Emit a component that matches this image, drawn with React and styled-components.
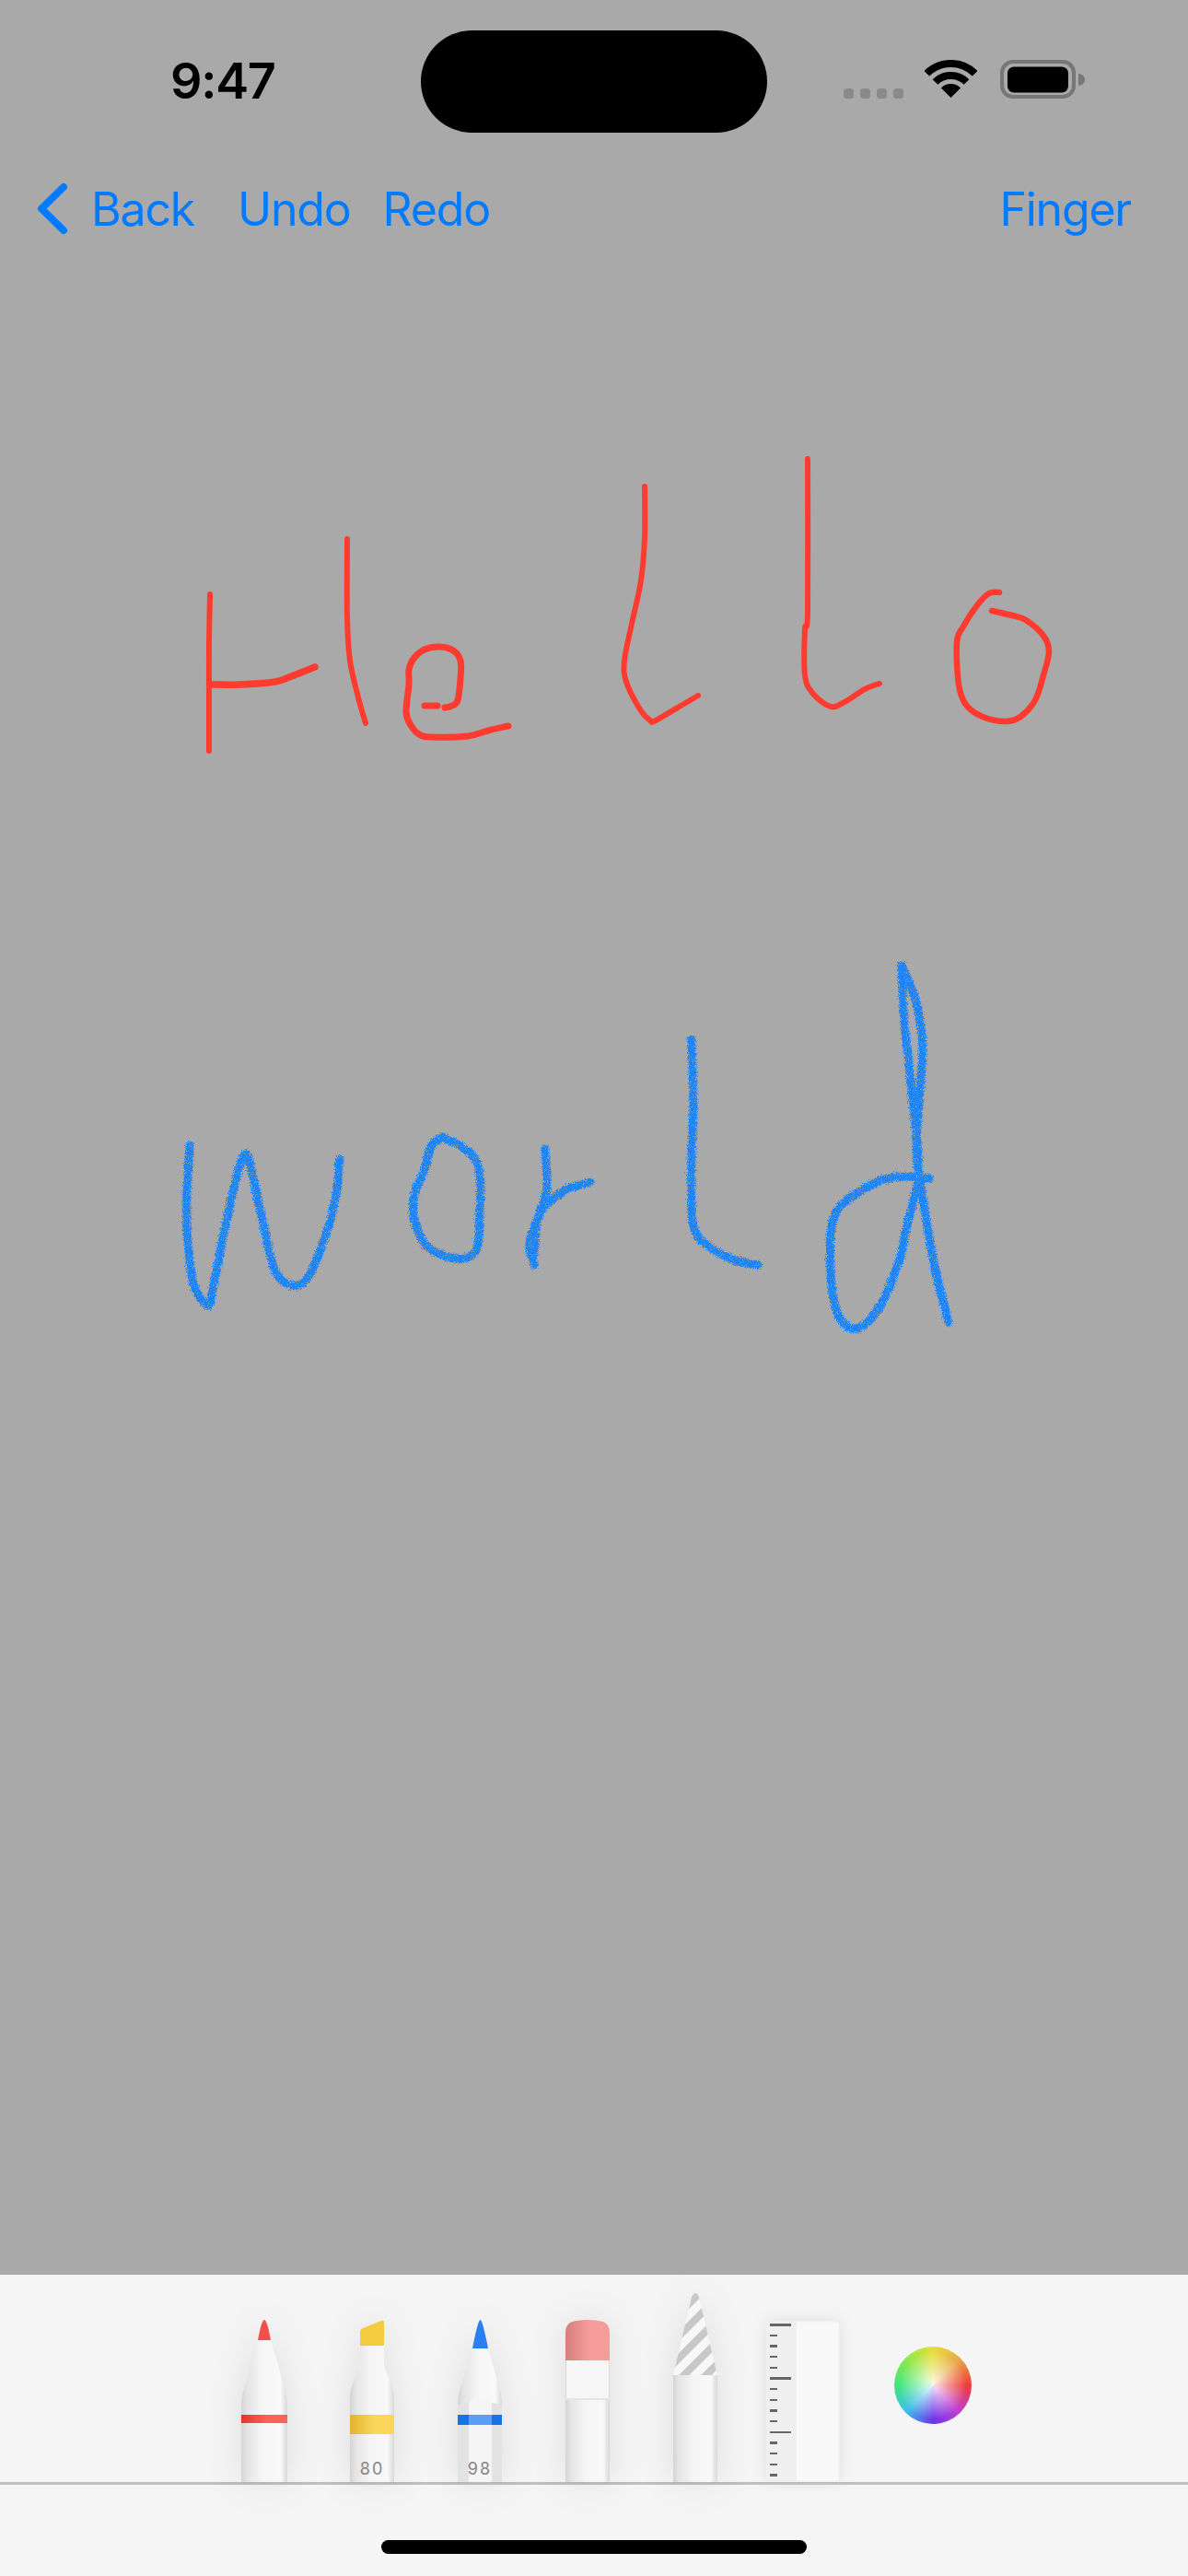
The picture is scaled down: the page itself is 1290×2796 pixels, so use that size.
import React from 'react'
import styled, { createGlobalStyle } from 'styled-components'

const RED_STROKES = [
  { width: 6, points: [[228, 645], [227, 700], [227, 760], [227, 815]] },
  { width: 7.5, points: [[230, 743], [261, 743], [299, 740], [314, 735], [342, 724]] },
  { width: 6, points: [[377, 585], [377, 670], [380, 717], [389, 757], [397, 785]] },
  { width: 7, points: [[461, 766], [475, 766]] },
  { width: 7, points: [[483, 768], [491, 766], [497, 760], [500, 736], [500, 717], [492, 706], [477, 702], [461, 705], [449, 715], [444, 727], [444, 743], [441, 773], [446, 787], [455, 797], [468, 800], [508, 799], [530, 793], [552, 788]] },
  { width: 6, points: [[700, 528], [700, 583], [696, 630], [686, 677], [678, 717], [680, 740], [695, 770], [706, 782], [712, 782], [746, 762], [758, 755]] },
  { width: 6, points: [[877, 498], [877, 663], [874, 683], [874, 733], [883, 753], [902, 767], [917, 762], [939, 748], [955, 742]] },
  { width: 6.5, points: [[1085, 643], [1074, 644], [1061, 657], [1046, 680], [1039, 697], [1041, 743], [1049, 765], [1067, 778], [1092, 783], [1108, 778], [1124, 760], [1133, 733], [1139, 707], [1133, 690], [1114, 673], [1099, 668], [1077, 663]] }
]

const BLUE_STROKES = [
  [[206, 1243], [203, 1303], [204, 1347], [210, 1393], [226, 1417], [233, 1390], [245, 1330], [259, 1270], [268, 1253], [276, 1283], [288, 1337], [299, 1380], [316, 1395], [334, 1387], [354, 1340], [365, 1297], [369, 1258]],
  [[480, 1234], [468, 1245], [461, 1270], [450, 1297], [450, 1323], [463, 1352], [494, 1366], [517, 1357], [521, 1317], [521, 1273], [509, 1250], [480, 1234]],
  [[592, 1247], [594, 1290], [586, 1317], [575, 1350], [580, 1373]],
  [[580, 1363], [586, 1317], [612, 1293], [624, 1288], [641, 1283]],
  [[751, 1128], [753, 1197], [751, 1263], [753, 1330], [770, 1353], [796, 1367], [823, 1373]],
  [[979, 1048], [982, 1107], [988, 1163], [995, 1230], [997, 1280], [985, 1330], [976, 1370], [956, 1417], [931, 1442], [910, 1427], [902, 1380], [905, 1323], [928, 1297], [968, 1278], [1009, 1279]],
  [[979, 1048], [991, 1075], [997, 1097], [1002, 1137], [998, 1197], [995, 1247], [999, 1280], [1014, 1370], [1030, 1435]]
]

const RULER_TICKS = [1, 0, 0, 0, 0, 1, 0, 0, 0, 0, 1, 0, 0, 0, 0]

// turns a list of sampled pen points into a smooth curve
function smoothPath (points) {
  let d = `M${points[0][0]} ${points[0][1]}`
  for (let i = 0; i < points.length - 1; i++) {
    const p0 = points[i - 1] || points[i]
    const p1 = points[i]
    const p2 = points[i + 1]
    const p3 = points[i + 2] || p2
    const c1x = p1[0] + (p2[0] - p0[0]) / 6
    const c1y = p1[1] + (p2[1] - p0[1]) / 6
    const c2x = p2[0] - (p3[0] - p1[0]) / 6
    const c2y = p2[1] - (p3[1] - p1[1]) / 6
    d += ` C${c1x} ${c1y} ${c2x} ${c2y} ${p2[0]} ${p2[1]}`
  }
  return d
}

const GlobalStyle = createGlobalStyle`
  html, body {
    margin: 0;
    padding: 0;
    background: #a9a9a9;
  }
`

const Screen = styled.div`
  width: 1290px;
  height: 2796px;
  display: flex;
  flex-direction: column;
  overflow: hidden;
  background: #a9a9a9;
  font-family: Inter, "Liberation Sans", sans-serif;
`

const StatusBar = styled.div`
  flex: 0 0 177px;
  box-sizing: border-box;
  padding-top: 33px;
  display: flex;
  align-items: flex-start;
`

const Time = styled.div`
  width: 272px;
  margin-left: 185px;
  margin-top: 26px;
  font-size: 54px;
  line-height: 58px;
  font-weight: 600;
  letter-spacing: -1.3px;
  color: #000;
`

const Island = styled.div`
  flex: 0 0 376px;
  height: 111px;
  border-radius: 56px;
  background: #000;
`

const StatusIcons = styled.div`
  margin-left: 83px;
  margin-top: 32px;
  height: 42px;
  display: flex;
  align-items: flex-end;
`

const SignalDots = styled.div`
  display: flex;
  gap: 7px;
  margin-right: 23px;
`

const SignalDot = styled.span`
  width: 11px;
  height: 11px;
  border-radius: 3.5px;
  background: #8a8a8a;
`

const WifiIcon = styled.svg`
  width: 57px;
  height: 42px;
  margin-right: 25px;
`

const BatteryIcon = styled.svg`
  width: 92px;
  height: 42px;
`

const NavBar = styled.div`
  flex: 0 0 100px;
  box-sizing: border-box;
  padding: 21px 62px 0 40px;
  display: flex;
  align-items: flex-start;
  color: #007aff;
  font-size: 50px;
  line-height: 58px;
  letter-spacing: -1.2px;
`

const BackChevron = styled.svg`
  width: 34px;
  height: 57px;
  margin-right: 25px;
`

const NavAction = styled.span`
  margin-right: ${p => p.$gap}px;
`

const NavSpacer = styled.div`
  flex: 1;
`

const Canvas = styled.div`
  flex: 1;
  min-height: 0;
`

const DrawingSvg = styled.svg`
  display: block;
  width: 1290px;
  height: 2192px;
`

const Palette = styled.div`
  flex: 0 0 327px;
  display: flex;
  flex-direction: column;
  background: #f5f5f5;
`

const ToolTray = styled.div`
  flex: 0 0 225px;
  box-sizing: border-box;
  padding-left: 262px;
  display: flex;
  align-items: flex-end;
`

const ToolSlot = styled.div`
  position: relative;
  flex: none;
  width: ${p => p.$width}px;
  margin-left: ${p => p.$gap || 0}px;
  line-height: 0;
`

const ToolSvg = styled.svg`
  display: block;
  overflow: visible;
  filter: drop-shadow(0 0 18px rgba(0, 0, 0, 0.09));
`

const ToolLabel = styled.span`
  position: absolute;
  left: 0;
  right: 0;
  bottom: 5px;
  text-align: center;
  font-size: 18px;
  line-height: 18px;
  letter-spacing: 2px;
  color: #85858a;
`

const Ruler = styled.div`
  flex: none;
  width: 80px;
  height: 175px;
  margin-left: 53px;
  display: flex;
  background: #f9f9f9;
  box-shadow: 0 0 18px rgba(0, 0, 0, 0.09), inset 0 0 2px rgba(0, 0, 0, 0.16);
  border-radius: 2px 2px 0 0;
`

const RulerScale = styled.div`
  width: 33px;
  box-sizing: border-box;
  padding: 3px 0 0 4px;
  display: flex;
  flex-direction: column;
  gap: 9.17px;
  background: #efefef;
`

const RulerTick = styled.span`
  flex: 0 0 2.5px;
  width: ${p => (p.$long ? 23 : 8)}px;
  background: #666;
`

const ColorWheel = styled.div`
  flex: none;
  align-self: flex-start;
  width: 84px;
  height: 84px;
  margin-left: 59px;
  margin-top: 78px;
  border-radius: 50%;
  background:
    radial-gradient(circle, rgba(255, 255, 255, 0.85) 0%, rgba(255, 255, 255, 0) 62%),
    conic-gradient(#e8de3c, #e9a94c 45deg, #ee3a38 90deg, #c23fd0 135deg, #6a36ea 180deg, #3dbfea 225deg, #3fe680 270deg, #8ee84a 315deg, #e8de3c);
`

const Divider = styled.div`
  flex: 0 0 3px;
  background: #bfbfbf;
`

const HomeArea = styled.div`
  flex: 1;
  display: flex;
  justify-content: center;
  padding-top: 60px;
`

const HomeIndicator = styled.div`
  width: 462px;
  height: 15px;
  border-radius: 8px;
  background: #000;
`

function BodyGradient ({ id }) {
  return (
    <linearGradient id={id} x1='0' x2='1' y1='0' y2='0'>
      <stop offset='0' stopColor='#d4d4d4' />
      <stop offset='0.12' stopColor='#e4e4e4' />
      <stop offset='0.45' stopColor='#f5f5f5' />
      <stop offset='0.85' stopColor='#f9f9f9' />
      <stop offset='1' stopColor='#d8d8d8' />
    </linearGradient>
  )
}

function BandGradient ({ id, edge, middle }) {
  return (
    <linearGradient id={id} x1='0' x2='1' y1='0' y2='0'>
      <stop offset='0' stopColor={edge} />
      <stop offset='0.55' stopColor={middle} />
      <stop offset='1' stopColor={middle} />
    </linearGradient>
  )
}

function PenTool () {
  return (
    <ToolSlot $width={50}>
      <ToolSvg width='50' height='176' viewBox='0 0 50 176'>
        <defs>
          <BodyGradient id='pen-body' />
          <BandGradient id='pen-band' edge='#e0352c' middle='#fb625c' />
        </defs>
        <path d='M18 22 L32 22 L47 74 Q50 84 50 92 V176 H0 V92 Q0 84 3 74 Z' fill='url(#pen-body)' />
        <path d='M18 22 Q22 0 25 0 Q28 0 32 22 Z' fill='#f4504a' />
        <rect x='0' y='103' width='50' height='9' fill='url(#pen-band)' />
      </ToolSvg>
    </ToolSlot>
  )
}

function MarkerTool () {
  return (
    <ToolSlot $width={48} $gap={68}>
      <ToolSvg width='48' height='176' viewBox='0 0 48 176'>
        <defs>
          <BodyGradient id='marker-body' />
          <BandGradient id='marker-band' edge='#e0b52c' middle='#fad65a' />
        </defs>
        <path d='M11 28 H37 V45 C37 60 48 65 48 85 V176 H0 V85 C0 65 11 60 11 45 Z' fill='url(#marker-body)' />
        <path d='M11 28 V13 Q11 10 14 9 L35 0.5 Q37 0 37 3 V28 Z' fill='#f3cb3f' />
        <rect x='0' y='103' width='48' height='21' fill='url(#marker-band)' />
      </ToolSvg>
      <ToolLabel>80</ToolLabel>
    </ToolSlot>
  )
}

function BrushTool () {
  return (
    <ToolSlot $width={48} $gap={69}>
      <ToolSvg width='48' height='176' viewBox='0 0 48 176'>
        <defs>
          <BodyGradient id='brush-body' />
        </defs>
        <path d='M16 31 L33 31 L46 76 Q48 84 48 92 V176 H0 V92 Q0 84 2 76 Z' fill='url(#brush-body)' />
        <path d='M0 92 L12 90 V176 H0 Z M37 90 L48 92 V176 H37 Z' fill='#e3e3e3' />
        <path d='M12 176 V90 L20 85 H29 L37 90 V176 Z' fill='#f5f5f5' />
        <path d='M16 31 Q22 0 24.5 0 Q27 0 33 31 Z' fill='#2a80f0' />
        <rect x='0' y='103' width='48' height='11' fill='#1573e6' />
        <rect x='12' y='103' width='25' height='11' fill='#5a9ff5' />
      </ToolSvg>
      <ToolLabel>98</ToolLabel>
    </ToolSlot>
  )
}

function EraserTool () {
  return (
    <ToolSlot $width={48} $gap={69}>
      <ToolSvg width='48' height='176' viewBox='0 0 48 176'>
        <defs>
          <BodyGradient id='eraser-body' />
          <BandGradient id='eraser-cap' edge='#d67f7f' middle='#f69c9c' />
        </defs>
        <rect x='0' y='44' width='48' height='132' fill='url(#eraser-body)' />
        <rect x='1' y='44' width='46' height='41' fill='#f6f6f6' />
        <path d='M0 44 V14 Q0 2 12 1 Q24 -1 36 1 Q48 2 48 14 V44 Z' fill='url(#eraser-cap)' />
        <rect x='0' y='85' width='48' height='2' fill='#e4e4e4' />
      </ToolSvg>
    </ToolSlot>
  )
}

function PencilTool () {
  return (
    <ToolSlot $width={48} $gap={69}>
      <ToolSvg width='48' height='206' viewBox='0 0 48 206'>
        <defs>
          <BodyGradient id='pencil-body' />
          <pattern id='pencil-stripes' width='17' height='17' patternUnits='userSpaceOnUse' patternTransform='rotate(45)'>
            <rect width='8' height='17' fill='#c8c8c8' />
          </pattern>
        </defs>
        <rect x='0' y='90' width='48' height='116' fill='url(#pencil-body)' />
        <path d='M0 90 L20 5 Q24 -3 28 5 L48 90 Z' fill='#f7f7f7' />
        <path d='M0 90 L20 5 Q24 -3 28 5 L48 90 Z' fill='url(#pencil-stripes)' />
      </ToolSvg>
    </ToolSlot>
  )
}

export default function App () {
  return (
    <Screen>
      <GlobalStyle />
      <StatusBar>
        <Time>9:47</Time>
        <Island />
        <StatusIcons>
          <SignalDots>
            {[0, 1, 2, 3].map(dot => <SignalDot key={dot} />)}
          </SignalDots>
          <WifiIcon viewBox='0 0 57 42'>
            <path d='M2.3 14.8 A37 37 0 0 1 54.7 14.8' fill='none' stroke='#000' strokeWidth='8' />
            <path d='M11.5 24 A24 24 0 0 1 45.5 24' fill='none' stroke='#000' strokeWidth='8' />
            <path d='M28.5 41 L17.9 30.4 A15 15 0 0 1 39.1 30.4 Z' fill='#000' />
          </WifiIcon>
          <BatteryIcon viewBox='0 0 92 42'>
            <rect x='2' y='2' width='78' height='38' rx='12' fill='none' stroke='#777' strokeWidth='4' />
            <rect x='8' y='7.5' width='66' height='28' rx='7' fill='#000' />
            <path d='M85 15 A7 6.5 0 0 1 85 28 Z' fill='#777' />
          </BatteryIcon>
        </StatusIcons>
      </StatusBar>
      <NavBar>
        <BackChevron viewBox='0 0 34 57'>
          <path d='M29 5 L5 28.5 L29 52' fill='none' stroke='#007aff' strokeWidth='8' strokeLinecap='round' strokeLinejoin='round' />
        </BackChevron>
        <NavAction $gap={47}>Back</NavAction>
        <NavAction $gap={35}>Undo</NavAction>
        <NavAction $gap={0}>Redo</NavAction>
        <NavSpacer />
        <NavAction $gap={0}>Finger</NavAction>
      </NavBar>
      <Canvas>
        <DrawingSvg viewBox='0 277 1290 2192'>
          <defs>
            {/* rough edge plus small holes, like the crayon tool */}
            <filter id='crayon' x='-5%' y='-5%' width='110%' height='110%'>
              <feTurbulence type='fractalNoise' baseFrequency='1.1' numOctaves='2' seed='4' result='noise' />
              <feDisplacementMap in='SourceGraphic' in2='noise' scale='8' xChannelSelector='R' yChannelSelector='G' result='rough' />
              <feColorMatrix in='noise' type='matrix' values='0 0 0 0 0  0 0 0 0 0  0 0 0 0 0  4 0 0 0 -0.7' result='holes' />
              <feComposite in='rough' in2='holes' operator='in' />
            </filter>
          </defs>
          <g fill='none' stroke='#ff3b30' strokeLinecap='round' strokeLinejoin='round'>
            {RED_STROKES.map((item, index) => (
              <path key={index} d={smoothPath(item.points)} strokeWidth={item.width} />
            ))}
          </g>
          <g fill='none' stroke='#1f84f9' strokeWidth='9' strokeLinecap='round' strokeLinejoin='round' filter='url(#crayon)'>
            {BLUE_STROKES.map((points, index) => (
              <path key={index} d={smoothPath(points)} />
            ))}
          </g>
        </DrawingSvg>
      </Canvas>
      <Palette>
        <ToolTray>
          <PenTool />
          <MarkerTool />
          <BrushTool />
          <EraserTool />
          <PencilTool />
          <Ruler>
            <RulerScale>
              {RULER_TICKS.map((long, index) => <RulerTick key={index} $long={long === 1} />)}
            </RulerScale>
          </Ruler>
          <ColorWheel />
        </ToolTray>
        <Divider />
        <HomeArea>
          <HomeIndicator />
        </HomeArea>
      </Palette>
    </Screen>
  )
}
